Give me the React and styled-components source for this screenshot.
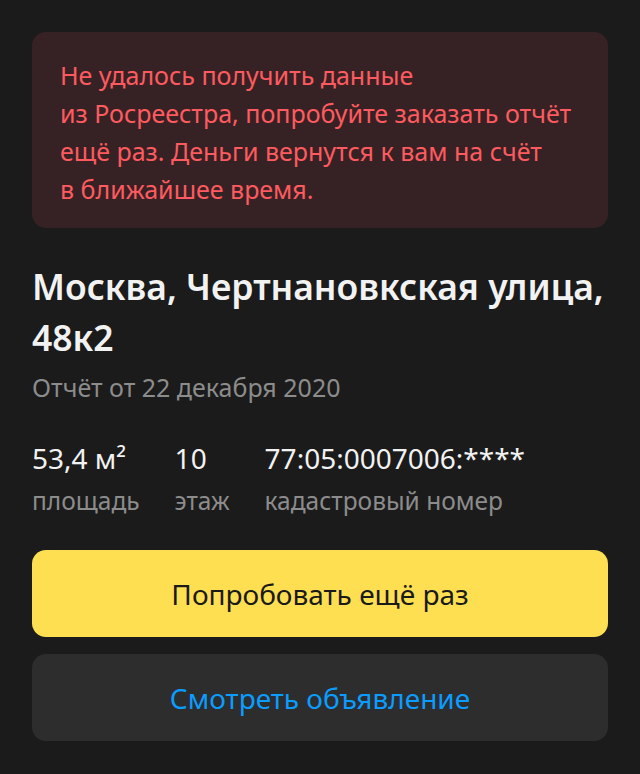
import React from 'react';
import styled, { createGlobalStyle } from 'styled-components';

const GlobalStyle = createGlobalStyle`
    html, body {
        margin: 0;
        padding: 0;
        background: #1b1b1b;
    }
    body {
        font-family: "Noto Sans", "Open Sans", Arial, sans-serif;
        -webkit-font-smoothing: antialiased;
    }
`;

const Page = styled.main`
    padding: 32px;
    display: flex;
    flex-direction: column;
`;

const Alert = styled.section`
    background: #362224;
    border-radius: 14px;
    padding: 24px 28px 20px;
    color: #ff5a5f;
    font-size: 25px;
    line-height: 38px;
`;

const Title = styled.h1`
    margin: 33px 0 0;
    color: #f2f2f2;
    font-size: 35.5px;
    line-height: 51px;
    font-weight: 600;
`;

const Subtitle = styled.p`
    margin: 10px 0 0;
    color: #8c8c8c;
    font-size: 25px;
    line-height: 28px;
`;

const Stats = styled.dl`
    margin: 40px 0 0;
    display: flex;
    gap: 35px;
`;

const Stat = styled.div`
    display: flex;
    flex-direction: column;
    gap: 10px;
`;

const Value = styled.dt`
    color: #f2f2f2;
    font-size: 28px;
    line-height: 34px;
`;

const Label = styled.dd`
    margin: 0;
    color: #8c8c8c;
    font-size: 24.5px;
    line-height: 32px;
`;

const Actions = styled.div`
    margin-top: 33px;
    display: flex;
    flex-direction: column;
    gap: 17px;
`;

const Button = styled.button`
    height: 87px;
    border: none;
    border-radius: 14px;
    font-family: inherit;
    font-size: 28px;
    cursor: pointer;
    background: ${p => p.primary ? '#ffdf52' : '#2d2d2d'};
    color: ${p => p.primary ? '#1a1a1a' : '#0a9cff'};
`;

const stats = [
    { value: <>53,4 м²</>, label: 'площадь' },
    { value: '10', label: 'этаж' },
    { value: '77:05:0007006:****', label: 'кадастровый номер' }
];

export default function App() {
    return (
        <Page>
            <GlobalStyle />
            <Alert>
                Не удалось получить данные<br />
                из Росреестра, попробуйте заказать отчёт<br />
                ещё раз. Деньги вернутся к вам на счёт<br />
                в ближайшее время.
            </Alert>
            <Title>Москва, Чертнановкская улица, 48к2</Title>
            <Subtitle>Отчёт от 22 декабря 2020</Subtitle>
            <Stats>
                {stats.map((s, idx) => (
                    <Stat key={idx}>
                        <Value>{s.value}</Value>
                        <Label>{s.label}</Label>
                    </Stat>
                ))}
            </Stats>
            <Actions>
                <Button primary>Попробовать ещё раз</Button>
                <Button>Смотреть объявление</Button>
            </Actions>
        </Page>
    );
}
